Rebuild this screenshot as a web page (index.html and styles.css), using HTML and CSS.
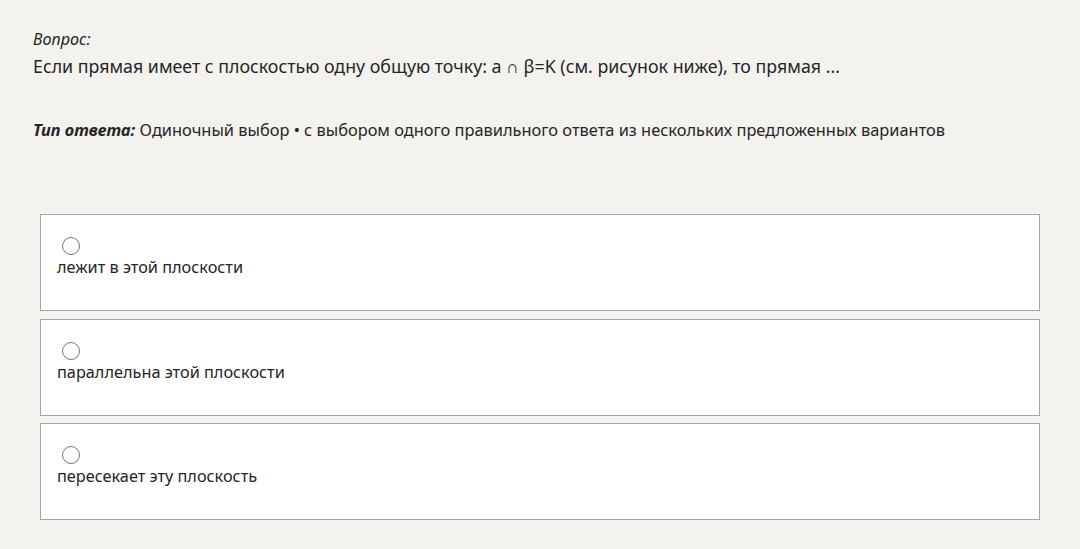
FILE: index.html
```html
<!DOCTYPE html>
<html lang="ru">
<head>
  <meta charset="UTF-8">
  <meta name="viewport" content="width=device-width, initial-scale=1.0">
  <title>Вопрос</title>
  <link rel="stylesheet" href="styles.css">
</head>
<body>
  <div class="question">
    <div class="label">Вопрос:</div>
    <p class="text">Если прямая имеет с плоскостью одну общую точку: a ∩ β=K (см. рисунок ниже), то прямая ...</p>
    <p class="type"><span class="type-label">Тип ответа:</span> Одиночный выбор • с выбором одного правильного ответа из нескольких предложенных вариантов</p>
  </div>
  <div class="answers">
    <label class="option">
      <span class="radio"></span>
      <span class="option-text">лежит в этой плоскости</span>
    </label>
    <label class="option">
      <span class="radio"></span>
      <span class="option-text">параллельна этой плоскости</span>
    </label>
    <label class="option">
      <span class="radio"></span>
      <span class="option-text">пересекает эту плоскость</span>
    </label>
  </div>
</body>
</html>
```

FILE: styles.css
```css
body {
  margin: 0;
  background-color: #f3f2ef;
  color: #262626;
  font-family: 'Noto Sans', 'Open Sans', sans-serif;
  padding: 28px 40px 0 33px;
}
.label {
  font-style: italic;
  font-size: 16.2px;
  line-height: 22px;
}
.text {
  margin: 3px 0 0;
  font-size: 17.8px;
  line-height: 26px;
}
.type {
  margin: 39px 0 0;
  font-size: 16.4px;
  line-height: 24px;
}
.type-label {
  font-style: italic;
  font-weight: bold;
}
.answers {
  margin: 72px 0 0 7px;
  display: flex;
  flex-direction: column;
  gap: 7.5px;
}
.option {
  display: flex;
  flex-direction: column;
  align-items: flex-start;
  height: 97px;
  box-sizing: border-box;
  background: #fff;
  border: 1px solid #a6a6a6;
  padding: 22px 16px 0;
}
.radio {
  width: 16px;
  height: 16px;
  border: 1px solid #777;
  border-radius: 50%;
  margin-left: 5px;
}
.option-text {
  font-size: 16.3px;
  line-height: 24px;
}
```
